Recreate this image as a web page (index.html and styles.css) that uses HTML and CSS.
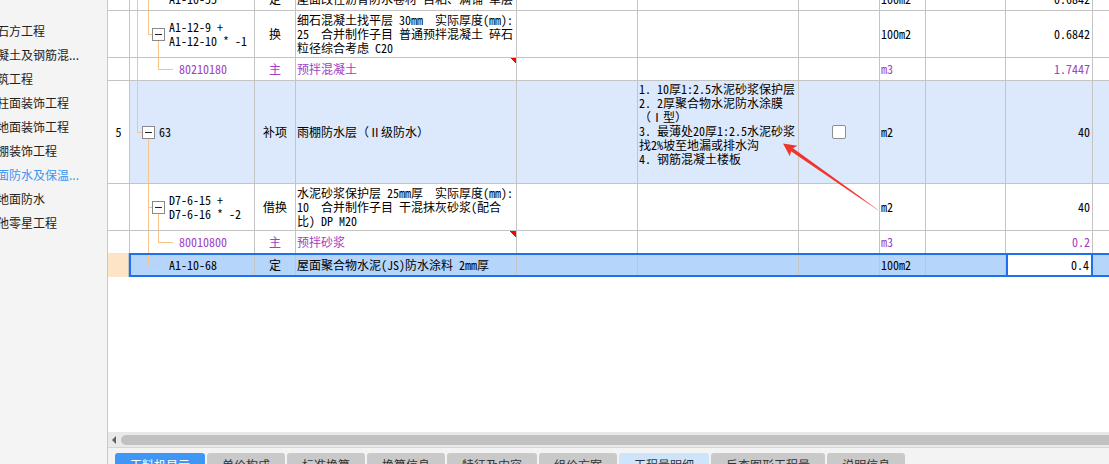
FILE: index.html
```html
<!DOCTYPE html>
<html lang="zh-CN">
<head>
<meta charset="utf-8">
<title>工料机显示</title>
<link rel="stylesheet" href="styles.css">
</head>
<body>
<div class="app">
  <aside class="nav">
    <ul class="nav-list">
      <li class="nav-item">土石方工程</li>
      <li class="nav-item">混凝土及钢筋混...</li>
      <li class="nav-item">砌筑工程</li>
      <li class="nav-item">墙柱面装饰工程</li>
      <li class="nav-item">楼地面装饰工程</li>
      <li class="nav-item">天棚装饰工程</li>
      <li class="nav-item active">屋面防水及保温...</li>
      <li class="nav-item">楼地面防水</li>
      <li class="nav-item">其他零星工程</li>
    </ul>
  </aside>
  <main class="main">
    <div class="grid-area">
      <div class="rows">
        <div class="row r-a">
          <div class="c"></div>
          <div class="c tree t-a">A1-10-55</div>
          <div class="c ctr">定</div>
          <div class="c">屋面改性沥青防水卷材 自粘、满铺 单层</div>
          <div class="c"></div><div class="c"></div><div class="c"></div>
          <div class="c">100m2</div><div class="c"></div>
          <div class="c num">0.6842</div><div class="c"></div>
        </div>
        <div class="row r-b">
          <div class="c"></div>
          <div class="c tree t-b"><span class="tb"></span><span class="txt">A1-12-9 +<br>A1-12-10 * -1</span></div>
          <div class="c ctr">换</div>
          <div class="c"><span class="txt">细石混凝土找平层 30mm&nbsp; 实际厚度(mm):<br>25&nbsp; 合并制作子目 普通预拌混凝土 碎石<br>粒径综合考虑 C20</span></div>
          <div class="c"></div><div class="c"></div><div class="c"></div>
          <div class="c">100m2</div><div class="c"></div>
          <div class="c num">0.6842</div><div class="c"></div>
        </div>
        <div class="row r-c">
          <div class="c"></div>
          <div class="c tree t-c purple">80210180</div>
          <div class="c ctr purple">主</div>
          <div class="c purple flag">预拌混凝土</div>
          <div class="c"></div><div class="c"></div><div class="c"></div>
          <div class="c purple">m3</div><div class="c"></div>
          <div class="c num purple">1.7447</div><div class="c"></div>
        </div>
        <div class="row r-d hl">
          <div class="c ctr">5</div>
          <div class="c tree t-d"><span class="tb"></span><span class="txt">63</span></div>
          <div class="c ctr">补项</div>
          <div class="c">雨棚防水层（Ⅱ级防水）</div>
          <div class="c"></div>
          <div class="c feat">1. 10厚1:2.5水泥砂浆保护层<br>2. 2厚聚合物水泥防水涂膜<br>（Ⅰ型）<br>3. 最薄处20厚1:2.5水泥砂浆<br>找2%坡至地漏或排水沟<br>4. 钢筋混凝土楼板</div>
          <div class="c ctr"><span class="chk"></span></div>
          <div class="c">m2</div><div class="c"></div>
          <div class="c num">40</div><div class="c"></div>
        </div>
        <div class="row r-e">
          <div class="c"></div>
          <div class="c tree t-e"><span class="tb"></span><span class="txt">D7-6-15 +<br>D7-6-16 * -2</span></div>
          <div class="c ctr">借换</div>
          <div class="c"><span class="txt">水泥砂浆保护层 25mm厚&nbsp; 实际厚度(mm):<br>10&nbsp; 合并制作子目 干混抹灰砂浆(配合<br>比) DP M20</span></div>
          <div class="c"></div><div class="c"></div><div class="c"></div>
          <div class="c">m2</div><div class="c"></div>
          <div class="c num">40</div><div class="c"></div>
        </div>
        <div class="row r-f">
          <div class="c"></div>
          <div class="c tree t-f purple">80010800</div>
          <div class="c ctr purple">主</div>
          <div class="c purple flag">预拌砂浆</div>
          <div class="c"></div><div class="c"></div><div class="c"></div>
          <div class="c purple">m3</div><div class="c"></div>
          <div class="c num purple">0.2</div><div class="c"></div>
        </div>
        <div class="row-sel">
          <div class="rn"></div>
          <div class="selbox">
            <div class="c tree t-g">A1-10-68</div>
            <div class="c ctr">定</div>
            <div class="c">屋面聚合物水泥(JS)防水涂料 2mm厚</div>
            <div class="c"></div><div class="c"></div><div class="c"></div>
            <div class="c">100m2</div><div class="c"></div>
            <div class="c num val-edit">0.4</div>
            <div class="c"></div>
          </div>
        </div>
      </div>
    </div>
    <div class="hscroll">
      <span class="arrow-l"></span>
      <span class="thumb"></span>
    </div>
    <nav class="tabbar">
      <span class="tab active">工料机显示</span>
      <span class="tab">单价构成</span>
      <span class="tab">标准换算</span>
      <span class="tab">换算信息</span>
      <span class="tab">特征及内容</span>
      <span class="tab">组价方案</span>
      <span class="tab light">工程量明细</span>
      <span class="tab">反查图形工程量</span>
      <span class="tab">说明信息</span>
    </nav>
  </main>
  <svg class="annot" width="1109" height="464" viewBox="0 0 1109 464" aria-hidden="true">
    <defs>
      <linearGradient id="ag" gradientUnits="userSpaceOnUse" x1="783" y1="143" x2="878" y2="210">
        <stop offset="0" stop-color="#f0362a"/>
        <stop offset="0.8" stop-color="#f0362a"/>
        <stop offset="1" stop-color="#f7a39c"/>
      </linearGradient>
    </defs>
    <polygon fill="url(#ag)" points="783,143.5 797.4,145.7 793,148.3 878.2,209.8 877.8,210.2 791,151.3 789.9,156.3"/>
  </svg>
</div>
</body>
</html>
```
FILE: styles.css
```css
* { box-sizing: border-box; }
html, body { margin: 0; padding: 0; }
body { background: #fff; overflow: hidden; }

.app {
  position: relative;
  display: flex;
  width: 1109px;
  height: 464px;
  overflow: hidden;
}

/* left tree navigation */
.nav {
  flex: none;
  width: 108px;
  background: #f4f4f4;
  border-right: 1px solid #c9c9c9;
  overflow: hidden;
  font: 12px/24px "Noto Sans CJK SC", sans-serif;
  color: #222;
}
.nav-list { list-style: none; margin: 0; padding: 19px 0 0; }
.nav-item { margin-left: -15px; white-space: nowrap; }
.nav-item.active { color: #3d95f0; }

/* main area */
.main {
  flex: none;
  width: 1001px;
  display: flex;
  flex-direction: column;
}
.grid-area {
  --o: linear-gradient(#f8c48a, #f8c48a);
  flex: none;
  height: 432px;
  overflow: hidden;
  background: #fff;
  font: 12px/14px "Noto Sans Mono CJK SC", "Noto Sans CJK SC", monospace;
  color: #000;
}
.rows { margin-top: -13px; }

.row {
  display: grid;
  grid-template-columns: 22px 125px 41px 221px 121px 161px 81px 46px 80px 87px 40px;
}
.r-a { height: 24px; }
.r-b { height: 47px; }
.r-c { height: 23px; }
.r-d { height: 103px; }
.r-e { height: 47px; }
.r-f { height: 23px; }

.c {
  display: flex;
  align-items: center;
  overflow: hidden;
  white-space: nowrap;
  padding: 0 1px;
  border-right: 1px solid #c4c4c4;
  border-bottom: 1px solid #c4c4c4;
}
.ctr { justify-content: center; }
.num { justify-content: flex-end; padding-right: 2px; }
.purple { color: #a040c4; }

.hl .c { background-color: #dce8fb; }
.hl .c:first-child { background-color: #fff; }

.feat {
  display: block;
  padding-top: 1px;
  padding-left: 1px;
}

.flag {
  background-image: linear-gradient(225deg, #f00 50%, transparent 50%);
  background-size: 6px 6px;
  background-position: top right;
  background-repeat: no-repeat;
}

.chk {
  width: 14px;
  height: 14px;
  border: 1px solid #8e8e8e;
  border-radius: 2px;
  background: #fff;
}

/* tree connectors */
.tree { background-repeat: no-repeat; }
.tb {
  flex: none;
  width: 13px;
  height: 13px;
  border: 1px solid #8a8a8a;
  background: #fff;
  display: flex;
  align-items: center;
  justify-content: center;
  margin-right: 4px;
}
.tb::before { content: ""; width: 7px; height: 1px; background: #222; }

.t-a {
  padding-left: 39px;
  background-image: var(--o), var(--o), var(--o);
  background-position: 7px 0, 18px 0, 18px 50%;
  background-size: 1px 100%, 1px 100%, 15px 1px;
}
.t-b {
  padding-left: 22px;
  background-image: var(--o), var(--o), var(--o), var(--o);
  background-position: 7px 0, 18px 0, 18px 50%, 28px 100%;
  background-size: 1px 100%, 1px 50%, 4px 1px, 1px 50%;
}
.t-c {
  padding-left: 49px;
  background-image: var(--o), var(--o), var(--o);
  background-position: 7px 0, 28px 0, 28px 50%;
  background-size: 1px 100%, 1px 50%, 15px 1px;
}
.t-d {
  padding-left: 12px;
  background-image: var(--o), var(--o), var(--o);
  background-position: 7px 0, 7px 50%, 18px 100%;
  background-size: 1px 50%, 5px 1px, 1px 50%;
}
.t-e {
  padding-left: 22px;
  background-image: var(--o), var(--o), var(--o);
  background-position: 18px 0, 18px 50%, 28px 100%;
  background-size: 1px 100%, 4px 1px, 1px 50%;
}
.t-f {
  padding-left: 49px;
  background-image: var(--o), var(--o), var(--o);
  background-position: 18px 0, 28px 0, 28px 50%;
  background-size: 1px 100%, 1px 50%, 15px 1px;
}
.t-g {
  padding-left: 38px;
  background-image: var(--o), var(--o);
  background-position: 17px 0, 17px 50%;
  background-size: 1px 50%, 15px 1px;
}

/* selected row */
.row-sel {
  display: flex;
  height: 24px;
  margin-top: -1px;
}
.rn {
  flex: none;
  width: 21px;
  background: #fee4c6;
  border-right: 1px solid #c4c4c4;
}
.selbox {
  flex: none;
  width: 1000px;
  border: 2px solid #1f70ea;
  background: #b6d5fb;
  display: grid;
  grid-template-columns: 124px 41px 221px 121px 161px 81px 46px 80px 87px 1fr;
}
.selbox .c { border-bottom: 0; }
.selbox .val-edit {
  background: #fff;
  border-left: 2px solid #1f70ea;
  border-right: 2px solid #1f70ea;
}

/* horizontal scrollbar */
.hscroll {
  flex: none;
  height: 15px;
  background: #e9e9e9;
  display: flex;
  align-items: center;
  padding-left: 4px;
}
.arrow-l {
  width: 0;
  height: 0;
  border-style: solid;
  border-width: 4px 4px 4px 0;
  border-color: transparent #606060 transparent transparent;
}
.thumb {
  flex: 1;
  height: 10px;
  margin-left: 5px;
  margin-right: -10px;
  background: #c1c1c1;
  border-radius: 5px;
}

/* bottom tabs */
.tabbar {
  flex: none;
  height: 40px;
  background: #f3f3f3;
  border-top: 1px solid #d6d6d6;
  padding: 5px 0 0 7px;
  display: flex;
  align-items: flex-start;
  gap: 2px;
  font: 12px/24px "Noto Sans CJK SC", sans-serif;
}
.tab {
  flex: none;
  height: 24px;
  padding: 0 15px;
  background: #c9c9c9;
  color: #333;
  border-radius: 3px 3px 0 0;
  white-space: nowrap;
}
.tab.active { background: #4096f5; color: #fff; }
.tab.light { background: #cde4fa; }

/* annotation arrow overlay */
.annot {
  position: absolute;
  left: 0;
  top: 0;
  pointer-events: none;
}
```
